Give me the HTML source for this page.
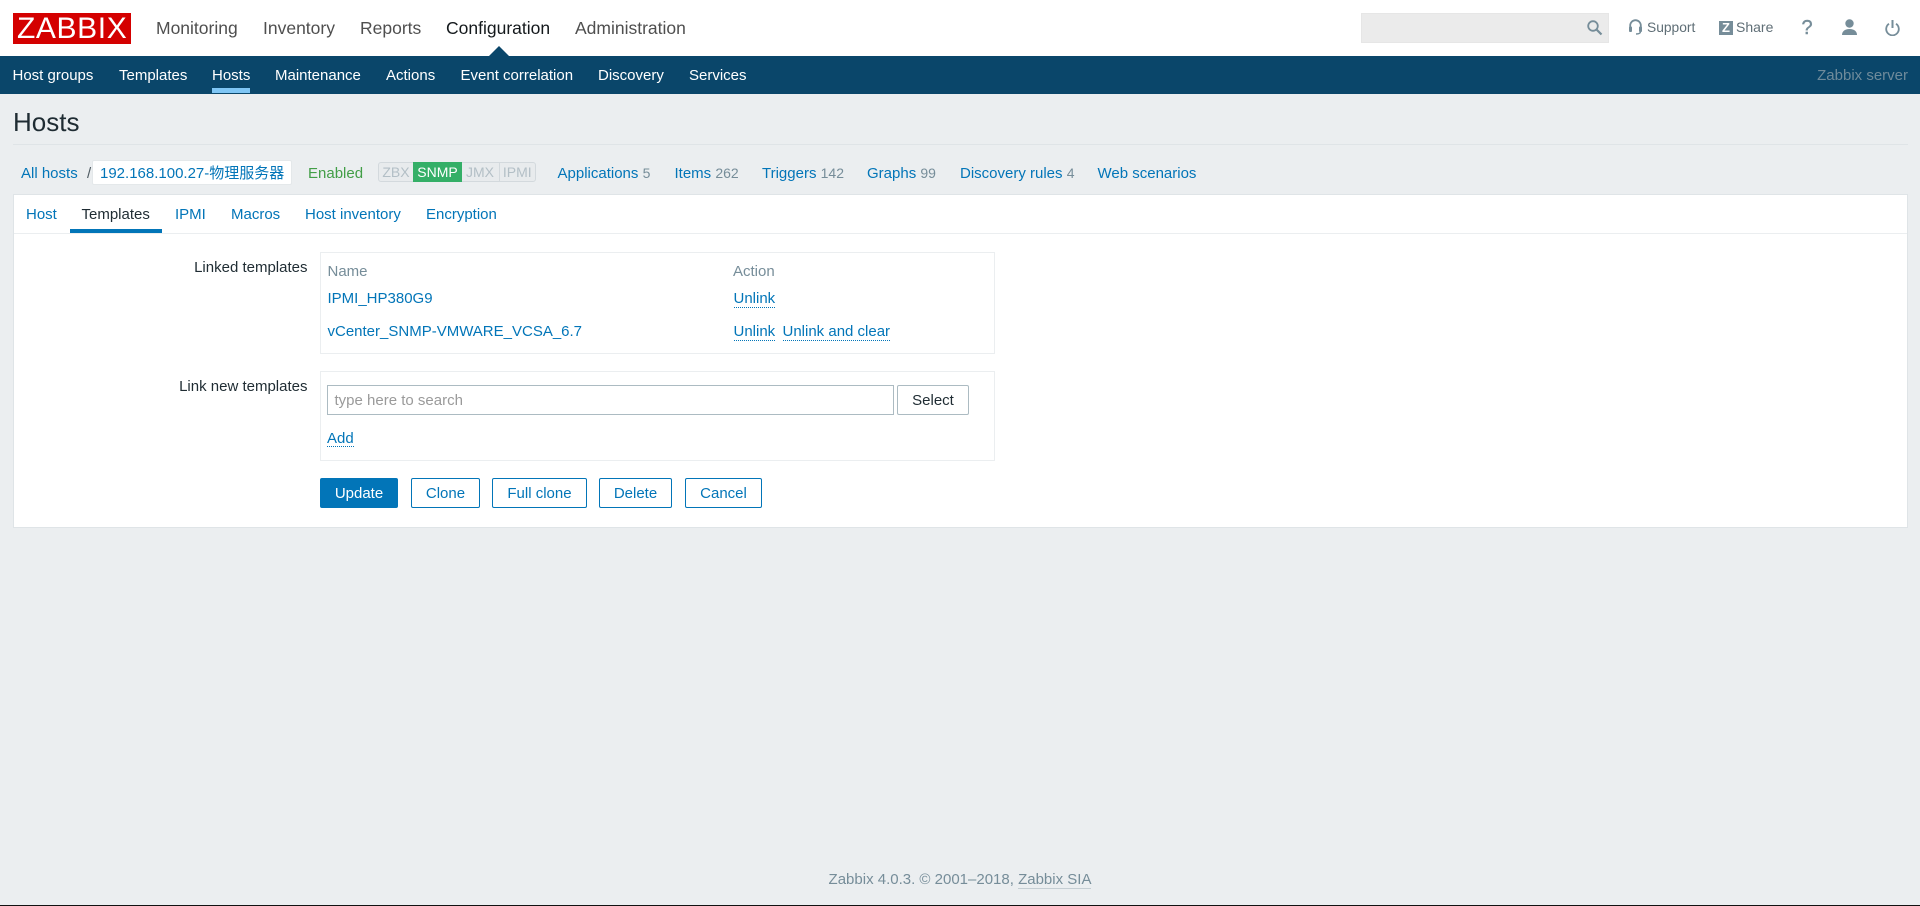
<!DOCTYPE html>
<html lang="en">
<head>
<meta charset="utf-8">
<title>Hosts</title>
<style>
html,body{margin:0;padding:0;width:1920px;height:906px;overflow:hidden;background:#ebeef0;}
body{position:relative;font-family:"Liberation Sans","Noto Sans CJK SC",Arial,sans-serif;font-size:15px;color:#1f2c33;}
.b{position:absolute;box-sizing:border-box;}
.t{position:absolute;white-space:nowrap;line-height:20px;height:20px;}
.top{font-size:17.5px;color:#4f4f4f;top:18px;}
.sub{font-size:15px;color:#fff;top:66px;}
.l{color:#0275b8;}
.g{color:#768d99;}
.crumb{top:164px;}
.crumb span{font-size:14px;line-height:0;}
.tab{top:205px;color:#0275b8;}
.d{border-bottom:1px dotted #0275b8;line-height:18px;height:17px;}
.btn{position:absolute;box-sizing:border-box;height:30px;top:478px;border:1px solid #0275b8;border-radius:2px;background:#fff;color:#0275b8;text-align:center;line-height:30px;font-size:15px;}
.badge{position:absolute;box-sizing:border-box;top:162px;height:20px;line-height:19px;text-align:center;font-size:14px;color:#b3bfc6;background:#e8ebed;border:1px solid #d3d9dd;}
svg{position:absolute;display:block;}
</style>
</head>
<body>
<!-- top bar -->
<div class="b" style="left:0;top:0;width:1920px;height:56px;background:#fff;"></div>
<div class="b" style="left:13px;top:13px;width:118px;height:31px;background:#d40000;"></div>
<div class="t" style="left:17px;top:13px;height:31px;line-height:31px;font-size:30px;color:#fff;letter-spacing:.6px;">ZABBIX</div>
<div class="t top" style="left:156px;">Monitoring</div>
<div class="t top" style="left:263px;">Inventory</div>
<div class="t top" style="left:360px;">Reports</div>
<div class="t top" style="left:446px;color:#14191c;">Configuration</div>
<div class="t top" style="left:575px;">Administration</div>
<svg style="left:489px;top:46px;" width="20" height="10"><polygon points="0,10 10,0 20,10" fill="#0a466a"/></svg>

<div class="b" style="left:1361px;top:13px;width:248px;height:30px;background:#ebebeb;border:1px solid #e6e6e6;"></div>
<svg style="left:1586px;top:19px;" width="17" height="17" viewBox="0 0 17 17"><circle cx="7" cy="7" r="4.8" fill="none" stroke="#768d99" stroke-width="1.800"/><path d="M10.500 10.500L15.500 15.500" stroke="#768d99" stroke-width="2.200"/></svg>
<svg style="left:1628px;top:19px;" width="15" height="16" viewBox="0 0 15 16"><path d="M2.200 9.500V6.500a5.300 5.300 0 0 1 10.600 0v3" fill="none" stroke="#768d99" stroke-width="1.800"/><rect x="1" y="7.500" width="3" height="5.500" rx="1" fill="#768d99"/><rect x="11" y="7.500" width="3" height="5.500" rx="1" fill="#768d99"/><path d="M12.500 12.500c0 1.800-2 2.500-4.500 2.500" fill="none" stroke="#768d99" stroke-width="1.400"/></svg>
<div class="t" style="left:1647px;top:18px;font-size:13.800px;color:#5f6e76;">Support</div>
<div class="b" style="left:1719px;top:21px;width:14px;height:14px;background:#768d99;color:#fff;font-size:13px;font-weight:bold;line-height:14px;text-align:center;">Z</div>
<div class="t" style="left:1736px;top:17px;font-size:14px;color:#5f6e76;">Share</div>
<div class="t" style="left:1801.500px;top:17px;font-size:20px;line-height:22px;height:22px;color:#768d99;-webkit-text-stroke:.4px #768d99;">?</div>
<svg style="left:1842px;top:19px;" width="15" height="16" viewBox="0 0 15 16"><circle cx="7.500" cy="4.500" r="4.200" fill="#768d99"/><path d="M0 16C0 12.500 2.500 10 7.500 10S15 12.500 15 16z" fill="#768d99"/></svg>
<svg style="left:1885px;top:20px;" width="15" height="16" viewBox="0 0 15 16"><path d="M4 3.800a6.300 6.300 0 1 0 7 0" fill="none" stroke="#768d99" stroke-width="1.800"/><path d="M7.500 0V8" stroke="#768d99" stroke-width="2"/></svg>

<!-- sub nav -->
<div class="b" style="left:0;top:56px;width:1920px;height:38px;background:#0a466a;"></div>
<div class="t sub" style="left:12.500px;">Host groups</div>
<div class="t sub" style="left:119px;">Templates</div>
<div class="t sub" style="left:212px;">Hosts</div>
<div class="b" style="left:212px;top:88px;width:38px;height:5px;background:#7fc6f5;"></div>
<div class="t sub" style="left:275px;">Maintenance</div>
<div class="t sub" style="left:386px;">Actions</div>
<div class="t sub" style="left:460.500px;">Event correlation</div>
<div class="t sub" style="left:598px;">Discovery</div>
<div class="t sub" style="left:689px;">Services</div>
<div class="t sub" style="right:12px;color:#6f8b9b;">Zabbix server</div>

<!-- title -->
<div class="t" style="left:13px;top:107px;height:30px;line-height:30px;font-size:26px;color:#1f2c33;">Hosts</div>
<div class="b" style="left:13px;top:144px;width:1895px;height:1px;background:#dfe4e7;"></div>

<!-- breadcrumbs -->
<div class="t crumb l" style="left:21px;">All hosts</div>
<div class="t crumb" style="left:87px;color:#4f5b62;">/</div>
<div class="b" style="left:91.500px;top:160px;width:200.500px;height:25px;background:#fff;border:1px solid #e4e8ea;border-radius:2px;"></div>
<div class="t crumb l" style="left:100px;">192.168.100.27-物理服务器</div>
<div class="t crumb" style="left:308px;color:#429e47;">Enabled</div>
<div class="badge" style="left:378px;width:36px;border-radius:3px 0 0 3px;">ZBX</div>
<div class="badge" style="left:413px;width:49px;background:#34af67;border-color:#34af67;color:#fff;">SNMP</div>
<div class="badge" style="left:461.500px;width:38px;border-left:0;">JMX</div>
<div class="badge" style="left:498.500px;width:37.500px;border-radius:0 3px 3px 0;">IPMI</div>
<div class="t crumb l" style="left:557.500px;">Applications <span class="g">5</span></div>
<div class="t crumb l" style="left:674.500px;">Items <span class="g">262</span></div>
<div class="t crumb l" style="left:762px;">Triggers <span class="g">142</span></div>
<div class="t crumb l" style="left:867px;">Graphs <span class="g">99</span></div>
<div class="t crumb l" style="left:960px;">Discovery rules <span class="g">4</span></div>
<div class="t crumb l" style="left:1097.500px;">Web scenarios</div>

<!-- container -->
<div class="b" style="left:13px;top:194px;width:1895px;height:334px;background:#fff;border:1px solid #dfe4e7;"></div>
<div class="b" style="left:14px;top:233px;width:1893px;height:1px;background:#ebeef0;"></div>
<div class="t tab" style="left:26px;">Host</div>
<div class="t tab" style="left:81.500px;color:#1f2c33;">Templates</div>
<div class="b" style="left:70px;top:229px;width:92px;height:4px;background:#0275b8;"></div>
<div class="t tab" style="left:175px;">IPMI</div>
<div class="t tab" style="left:231px;">Macros</div>
<div class="t tab" style="left:305px;">Host inventory</div>
<div class="t tab" style="left:426px;">Encryption</div>

<!-- linked templates -->
<div class="t" style="right:1612.500px;top:258px;">Linked templates</div>
<div class="b" style="left:320px;top:252px;width:675px;height:102px;border:1px solid #ebeef0;"></div>
<div class="t g" style="left:327.500px;top:262px;">Name</div>
<div class="t g" style="left:733px;top:262px;">Action</div>
<div class="t l" style="left:327.500px;top:289px;">IPMI_HP380G9</div>
<div class="t l d" style="left:733.500px;top:290px;">Unlink</div>
<div class="t l" style="left:327.500px;top:322px;">vCenter_SNMP-VMWARE_VCSA_6.7</div>
<div class="t l d" style="left:733.500px;top:323px;">Unlink</div>
<div class="t l d" style="left:782.500px;top:323px;">Unlink and clear</div>

<!-- link new -->
<div class="t" style="right:1612.500px;top:377px;">Link new templates</div>
<div class="b" style="left:320px;top:371px;width:675px;height:90px;border:1px solid #ebeef0;"></div>
<div class="b" style="left:327px;top:385px;width:567px;height:30px;background:#fff;border:1px solid #acbbc2;"></div>
<div class="t" style="left:334.500px;top:391px;color:#9a9a9a;">type here to search</div>
<div class="b" style="left:897px;top:385px;width:72px;height:30px;background:#fff;border:1px solid #acbbc2;border-radius:2px;text-align:center;line-height:29px;color:#1f2c33;">Select</div>
<div class="t l d" style="left:327px;top:430px;height:16px;">Add</div>

<!-- buttons -->
<div class="btn" style="left:320px;width:78px;background:#0275b8;color:#fff;">Update</div>
<div class="btn" style="left:411px;width:69px;">Clone</div>
<div class="btn" style="left:492px;width:95px;">Full clone</div>
<div class="btn" style="left:599px;width:73px;">Delete</div>
<div class="btn" style="left:685px;width:77px;">Cancel</div>

<!-- footer -->
<div class="t g" style="left:0;width:1920px;text-align:center;top:870px;">Zabbix 4.0.3. © 2001–2018, <span style="border-bottom:1px solid #c5ced3;">Zabbix SIA</span></div>
<div class="b" style="left:0;top:905px;width:1920px;height:1px;background:#111;"></div>
</body>
</html>
